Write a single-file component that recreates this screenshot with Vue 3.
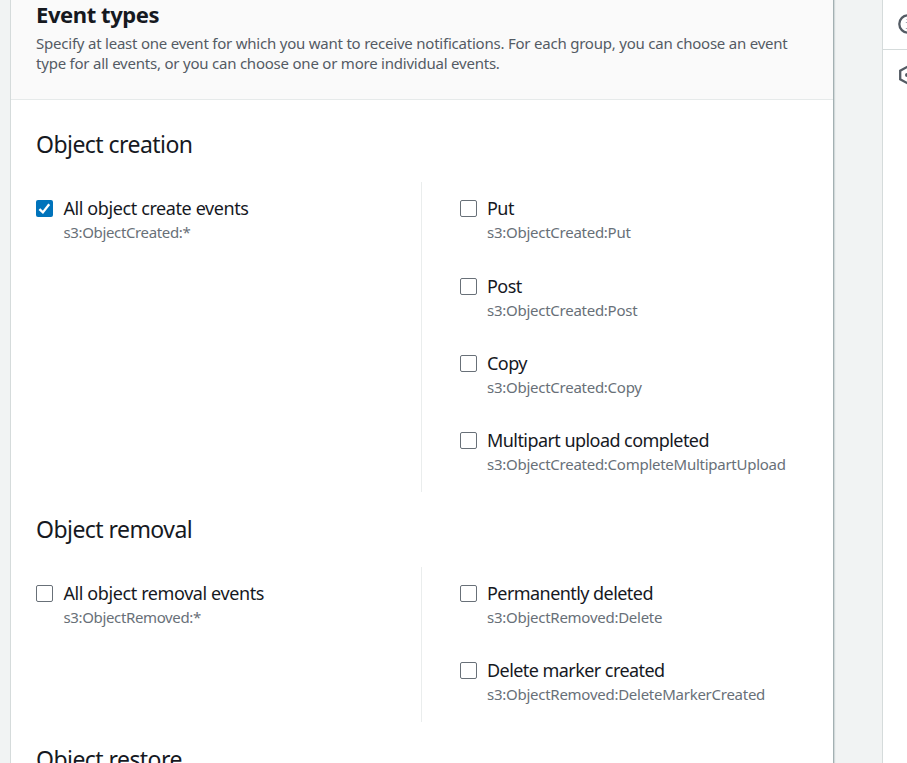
<script setup>
const groups = [
  {
    title: 'Object creation',
    all: { label: 'All object create events', code: 's3:ObjectCreated:*', checked: true },
    events: [
      { label: 'Put', code: 's3:ObjectCreated:Put' },
      { label: 'Post', code: 's3:ObjectCreated:Post' },
      { label: 'Copy', code: 's3:ObjectCreated:Copy' },
      { label: 'Multipart upload completed', code: 's3:ObjectCreated:CompleteMultipartUpload' },
    ],
  },
  {
    title: 'Object removal',
    all: { label: 'All object removal events', code: 's3:ObjectRemoved:*' },
    events: [
      { label: 'Permanently deleted', code: 's3:ObjectRemoved:Delete' },
      { label: 'Delete marker created', code: 's3:ObjectRemoved:DeleteMarkerCreated' },
    ],
  },
  { title: 'Object restore', all: null, events: [] },
]
</script>

<template>
  <div class="page">
    <main class="card">
      <header class="card-header">
        <h2><span>Event types</span></h2>
        <p>
          <span>Specify at least one event for which you want to receive notifications. For each group, you can choose an event</span><br />
          <span>type for all events, or you can choose one or more individual events.</span>
        </p>
      </header>
      <section v-for="group in groups" :key="group.title" class="group">
        <h3><span>{{ group.title }}</span></h3>
        <div v-if="group.all" class="columns">
          <div class="column left">
            <label class="option">
              <span class="box" :class="{ checked: group.all.checked }">
                <svg v-if="group.all.checked" viewBox="0 0 18 18"><path d="M3.6 9.6 7.3 13.1 14 4.6" /></svg>
              </span>
              <span class="text">
                <span class="name">{{ group.all.label }}</span>
                <span class="code">{{ group.all.code }}</span>
              </span>
            </label>
          </div>
          <div class="column right">
            <label v-for="event in group.events" :key="event.code" class="option">
              <span class="box"></span>
              <span class="text">
                <span class="name">{{ event.label }}</span>
                <span class="code">{{ event.code }}</span>
              </span>
            </label>
          </div>
        </div>
      </section>
    </main>
    <aside class="tools">
      <div class="tool info">
        <svg viewBox="0 0 20 20">
          <circle cx="10" cy="10" r="8.7" />
          <path class="thin" d="M7.8 8.5H10V14M7.8 14.5H12M8.5 5.5h2" />
        </svg>
      </div>
      <div class="tool">
        <svg viewBox="0 0 20 20">
          <path d="M10 1.4 17.8 5.7V14.3L10 18.6 2.2 14.3V5.7Z" />
          <circle class="dot" cx="9" cy="10" r="2" />
        </svg>
      </div>
    </aside>
  </div>
</template>

<style>
body {
  margin: 0;
  overflow: hidden;
}
</style>

<style scoped>
.page {
  display: flex;
  box-sizing: border-box;
  width: 907px;
  height: 763px;
  padding-left: 10px;
  overflow: hidden;
  background: #f1f3f3;
  color: #16191f;
  font-family: 'Noto Sans', 'Open Sans', sans-serif;
}
.card {
  box-sizing: border-box;
  width: 824px;
  flex: none;
  border-left: 1px solid #d5dbdb;
  border-right: 1px solid #a3b0b2;
  box-shadow: 1px 0 1px #d2d9da;
  background: #fff;
}
.card-header {
  box-sizing: border-box;
  height: 100px;
  padding: 0 25px;
  border-bottom: 1px solid #e6eaea;
  background: #fafafa;
}
h2 {
  margin: 0;
  font-size: 22px;
  line-height: 28px;
  font-weight: 700;
  letter-spacing: -0.42px;
}
p {
  margin: 5px 0 0;
  color: #545b64;
  font-size: 15px;
  line-height: 20px;
  letter-spacing: -0.22px;
  white-space: nowrap;
}
.group {
  padding-left: 25px;
}
.card-header + .group {
  padding-top: 7px;
}
h3 {
  box-sizing: border-box;
  height: 75.2px;
  margin: 0;
  padding-top: 22px;
  font-size: 23px;
  line-height: 30px;
  font-weight: 400;
  letter-spacing: -0.55px;
}
.columns {
  display: grid;
  grid-template-columns: 385px 1fr;
}
.right {
  padding-left: 38px;
  border-left: 1px solid #eaeded;
}
.option {
  display: flex;
  box-sizing: border-box;
  height: 77.4px;
  padding-top: 14px;
}
.box {
  box-sizing: border-box;
  width: 17px;
  height: 17px;
  flex: none;
  margin-top: 4px;
  border: 1px solid #687078;
  border-radius: 2px;
  background: #fff;
}
.box.checked {
  border: 0;
  background: #0073bb;
}
.box svg {
  display: block;
  width: 17px;
  height: 17px;
  fill: none;
  stroke: #fff;
  stroke-width: 2.5;
}
.text {
  display: flex;
  flex-direction: column;
  align-items: flex-start;
  margin-left: 10px;
  white-space: nowrap;
}
.left .text {
  margin-left: 10.5px;
}
.name {
  font-size: 18px;
  line-height: 24px;
  letter-spacing: -0.4px;
}
.right .name {
  letter-spacing: -0.56px;
}
.code {
  color: #687078;
  font-size: 15px;
  line-height: 24px;
  letter-spacing: -0.26px;
}
.left .code {
  letter-spacing: -0.36px;
}
.tools {
  box-sizing: border-box;
  width: 25px;
  flex: none;
  margin-left: 48px;
  border-left: 1px solid #d5dbdb;
  background: #fff;
  overflow: hidden;
}
.tool {
  box-sizing: border-box;
  height: 50px;
  padding: 15px 0 0 15px;
}
.tool.info {
  padding-top: 14px;
  border-bottom: 1px solid #d5dbdb;
}
.tool svg {
  display: block;
  width: 20px;
  height: 20px;
  fill: none;
  stroke: #545b64;
  stroke-width: 2.3;
}
.tool .thin {
  stroke: #a2a7ad;
  stroke-width: 1;
}
.tool .dot {
  fill: #545b64;
  stroke: none;
}
</style>
